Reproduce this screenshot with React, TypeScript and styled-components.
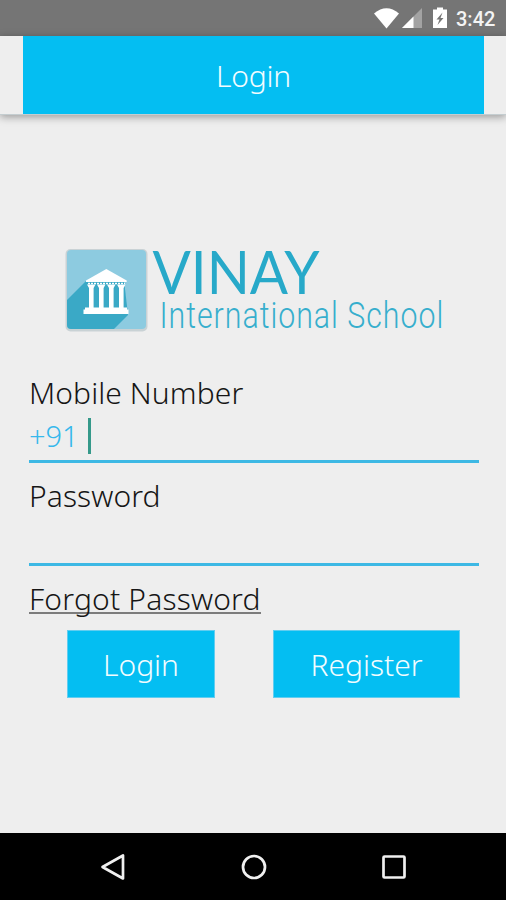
import React from 'react';
import styled, { createGlobalStyle } from 'styled-components';

const GlobalStyle = createGlobalStyle`
  * { box-sizing: border-box; }
  body { margin: 0; background: #eeeeee; }
`;

const Screen = styled.div`
  width: 506px;
  height: 900px;
  display: flex;
  flex-direction: column;
  background: #eeeeee;
  overflow: hidden;
  font-family: 'Noto Sans', 'Open Sans', sans-serif;
  font-weight: 300;
`;

const StatusBar = styled.div`
  height: 36px;
  flex: none;
  display: flex;
  align-items: center;
  justify-content: flex-end;
  padding-right: 11px;
  background: #757575;
`;

const StatusIcons = styled.svg`
  width: 76px;
  height: 24px;
  margin-right: 6px;
`;

const Clock = styled.span`
  width: 39px;
  font: 500 20px/36px Roboto, sans-serif;
  padding-top: 2px;
  white-space: nowrap;
  color: #f4f4f4;
`;

const Header = styled.header`
  height: 79px;
  flex: none;
  padding: 0 22px 0 23px;
  border-bottom: 1px solid #c4cdd0;
  box-shadow: 0 2px 8px rgba(0, 0, 0, 0.36);
`;

const Title = styled.h1`
  height: 78px;
  margin: 0;
  text-align: center;
  background: #04bef2;
  color: #f2fcff;
  font-size: 30px;
  font-weight: 300;
  line-height: 80px;
  letter-spacing: -0.2px;
`;

const Brand = styled.svg`
  display: block;
  overflow: visible;
  width: 390px;
  height: 92px;
  margin: 130px 0 0 61px;
  flex: none;
`;

const Form = styled.main`
  flex: 1;
  display: flex;
  flex-direction: column;
  align-items: flex-start;
  padding: 36px 27px 0 29px;
`;

const Label = styled.label`
  height: 40px;
  font-size: 30px;
  line-height: 40px;
  color: #161616;
  white-space: nowrap;
  letter-spacing: 0.1px;
`;

const Field = styled.div`
  height: 50px;
  width: 450px;
  display: flex;
  align-items: center;
  padding-bottom: 2px;
  border-bottom: 3px solid #3db8e4;
  margin-bottom: 13px;
  font-size: 29px;
  color: #36b8ec;
`;

const Caret = styled.span`
  width: 3px;
  height: 36px;
  margin-left: 9px;
  background: #35998a;
`;

const Forgot = styled.a`
  height: 35px;
  border-bottom: 2px solid #7c7c7c;
  font-size: 30px;
  line-height: 40px;
  color: #161616;
  white-space: nowrap;
  letter-spacing: 0.18px;
`;

const Actions = styled.div`
  display: flex;
  gap: 58px;
  padding: 16px 0 0 38px;
`;

const Button = styled.button<{ $width: number }>`
  width: ${p => p.$width}px;
  height: 68px;
  padding: 2px 0 0;
  border: 1px solid #62cdf0;
  background: #04bef2;
  color: #f2fcff;
  font: inherit;
  font-size: 30px;
  line-height: 64px;
`;

const NavBar = styled.nav`
  height: 67px;
  flex: none;
  display: flex;
  align-items: center;
  justify-content: space-between;
  padding: 0 98px 0 99px;
  background: #000;
`;

const NavIcon = styled.svg`
  width: 28px;
  height: 28px;
  fill: none;
  stroke: #f0f0f0;
  stroke-width: 2.7;
  stroke-linejoin: round;
`;

const columns = [89, 99, 109, 119];

export default function App() {
  return (
    <Screen>
      <GlobalStyle />
      <StatusBar>
        <StatusIcons viewBox="374 6 76 24">
          <path d="M374 13.500Q386.500 3 399 13.500L386.500 28.500Z" fill="#fff" />
          <path d="M422 8V28H402Z" fill="#a3a3a3" />
          <path d="M413.500 16.500V28H402Z" fill="#fff" />
          <path d="M433 9.500H437V7.500H443V9.500H447V28H433Z" fill="#fff" />
          <path d="M442.500 12.500L436.500 19.500H439.500L437.500 25L443.500 18H440.500Z" fill="#757575" />
        </StatusIcons>
        <Clock>3:42</Clock>
      </StatusBar>
      <Header>
        <Title>Login</Title>
      </Header>
      <Brand viewBox="61 245 390 92">
        <defs>
          <clipPath id="tile">
            <rect x="67" y="250" width="79" height="79" rx="4" />
          </clipPath>
        </defs>
        <rect x="65.500" y="249" width="82" height="82.500" rx="5" fill="#c9d2d5" />
        <g clipPath="url(#tile)">
          <rect x="67" y="250" width="79" height="79" fill="#8dcbe0" />
          <path d="M86 281L67 300V329H114L128 315L124 280Z" fill="#3aa9c6" />
        </g>
        <g fill="#fff">
          <path d="M106.300 269L126.700 280.500V282H86V280.500Z" />
          <path d="M88 283.500H125" stroke="#fff" strokeWidth="1.500" strokeDasharray="2 1" />
          {columns.map(x => (
            <path key={x} d={`M${x - 2} 284.500H${x + 6.5}L${x + 4.6} 288V308H${x}V288Z`} />
          ))}
          <path d="M85 307.500H127V309.500H128.500V314H83.500V309.500H85Z" />
        </g>
        <text x="152.500" y="294" fontFamily="Lato" fontWeight="400" fontSize="60" textLength="167" lengthAdjust="spacingAndGlyphs" fill="#27a9c9">VINAY</text>
        <text transform="translate(159.500 327.500) scale(0.82 1)" fontFamily="Roboto" fontWeight="300" fontSize="37" textLength="346" lengthAdjust="spacing" fill="#37aecd">International School</text>
      </Brand>
      <Form>
        <Label>Mobile Number</Label>
        <Field>+91<Caret /></Field>
        <Label>Password</Label>
        <Field />
        <Forgot>Forgot Password</Forgot>
        <Actions>
          <Button $width={148}>Login</Button>
          <Button $width={187}>Register</Button>
        </Actions>
      </Form>
      <NavBar>
        <NavIcon viewBox="0 0 28 28"><path d="M24 2.500V25.500L3.500 14Z" /></NavIcon>
        <NavIcon viewBox="0 0 28 28"><circle cx="14" cy="14" r="11" /></NavIcon>
        <NavIcon viewBox="0 0 28 28"><rect x="3.500" y="3.500" width="21" height="21" rx="1" /></NavIcon>
      </NavBar>
    </Screen>
  );
}
